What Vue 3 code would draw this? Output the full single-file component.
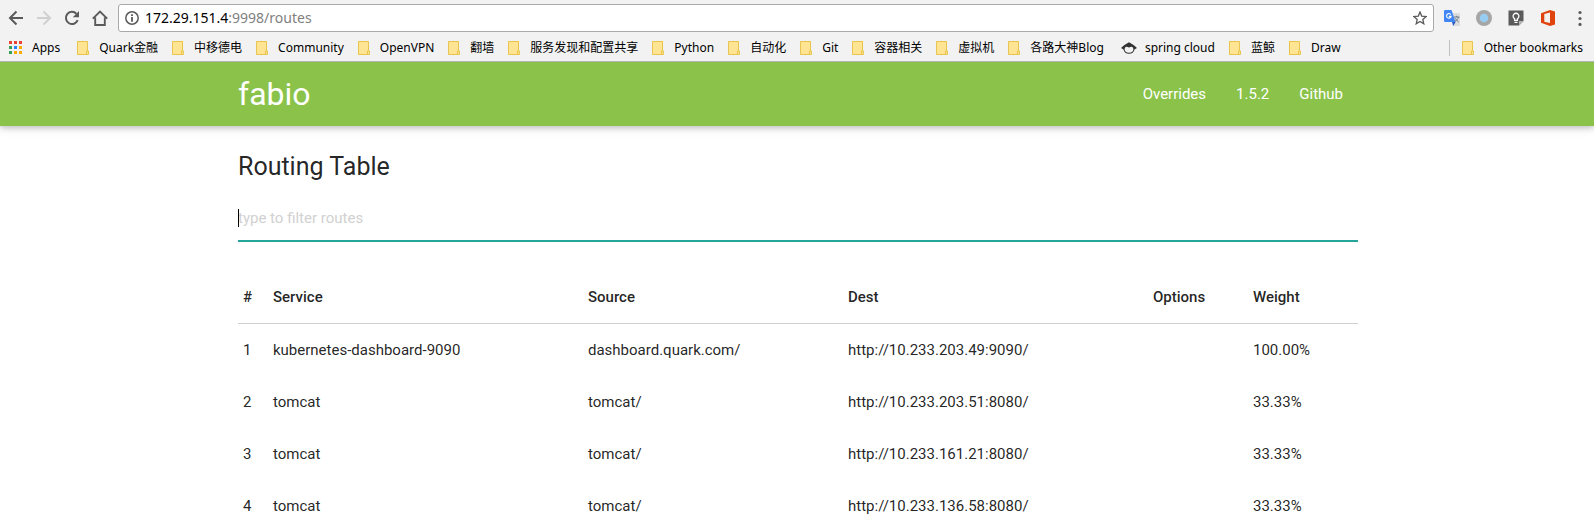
<script setup>
import { computed, onMounted, ref } from 'vue'

const bookmarks = [
  'Quark金融', '中移德电', 'Community', 'OpenVPN', '翻墙', '服务发现和配置共享', 'Python',
  '自动化', 'Git', '容器相关', '虚拟机', '各路大神Blog', 'spring cloud', '蓝鲸', 'Draw',
]
const appColors = ['#ea4335', '#ea4335', '#ea4335', '#34a056', '#2a83f5', '#f9ab00', '#34a056', '#f9ab00', '#f9ab00']

const routes = [
  { id: 1, service: 'kubernetes-dashboard-9090', source: 'dashboard.quark.com/', dest: 'http://10.233.203.49:9090/', options: '', weight: '100.00%' },
  { id: 2, service: 'tomcat', source: 'tomcat/', dest: 'http://10.233.203.51:8080/', options: '', weight: '33.33%' },
  { id: 3, service: 'tomcat', source: 'tomcat/', dest: 'http://10.233.161.21:8080/', options: '', weight: '33.33%' },
  { id: 4, service: 'tomcat', source: 'tomcat/', dest: 'http://10.233.136.58:8080/', options: '', weight: '33.33%' },
]

const filter = ref('')
const filterBox = ref(null)
const focused = ref(false)
const visible = computed(() => {
  const q = filter.value.toLowerCase()
  return routes.filter((r) => `${r.service} ${r.source} ${r.dest}`.toLowerCase().includes(q))
})
onMounted(() => filterBox.value.focus())
</script>

<template>
  <div class="page">
    <div class="browser">
      <div class="toolbar">
        <button class="tool" aria-label="Back">
          <svg width="16" height="16" viewBox="0 0 16 16"><path d="M15 8H2.5M8.5 1.5 2 8l6.5 6.5" fill="none" stroke="#5a5a5a" stroke-width="2" /></svg>
        </button>
        <button class="tool" aria-label="Forward">
          <svg width="16" height="16" viewBox="0 0 16 16"><path d="M1 8h12.5M7.5 1.5 14 8l-6.5 6.5" fill="none" stroke="#d0d0d0" stroke-width="2" /></svg>
        </button>
        <button class="tool" aria-label="Reload">
          <svg width="16" height="16" viewBox="0 0 16 16"><path d="M13.7 10.2A6.1 6.1 0 1 1 12.4 3.7" fill="none" stroke="#5a5a5a" stroke-width="2" /><path d="M15 1v6.2H8.8z" fill="#5a5a5a" /></svg>
        </button>
        <button class="tool" aria-label="Home">
          <svg width="16" height="16" viewBox="0 0 16 16"><path d="M.8 8.6 8 1.6l7.2 7M3.2 7.5V15h9.6V7.5" fill="none" stroke="#5a5a5a" stroke-width="1.9" /></svg>
        </button>
        <div class="omnibox">
          <svg width="14" height="14" viewBox="0 0 14 14"><circle cx="7" cy="7" r="6.2" fill="none" stroke="#5a5a5a" stroke-width="1.5" /><path d="M6.1 3.2h1.8V5H6.1zM6.1 6.1h1.8v4.7H6.1z" fill="#5a5a5a" /></svg>
          <span class="address"><b>172.29.151.4</b>:9998/routes</span>
          <button class="star" aria-label="Bookmark this page">
            <svg width="14" height="14" viewBox="0 0 14 14"><path d="m7 1 1.7 4.1 4.5.4-3.4 2.9 1 4.4L7 10.5l-3.8 2.3 1-4.4L.8 5.5l4.5-.4z" fill="none" stroke="#5a5a5a" stroke-width="1.3" /></svg>
          </button>
        </div>
        <div class="extensions">
          <button class="tool" aria-label="Translate">
            <svg width="16" height="16" viewBox="0 0 16 16"><path d="M6 3h9a1 1 0 0 1 1 1v11a1 1 0 0 1-1 1H9z" fill="#dcdcdc" /><path d="M1 0h6.5l4 12H1a1 1 0 0 1-1-1V1a1 1 0 0 1 1-1z" fill="#4285f4" /><path d="M8 12h3.6L9.2 16z" fill="#3058c8" /><path d="M6.8 4.6A2.3 2.3 0 1 0 7.1 6.4H4.9" fill="none" stroke="#fff" stroke-width="1.1" /><path d="M10 7h5.5M12.5 5.8V7M14.5 7c-.5 2-2 3.500-3.600 4.600M11.300 8.300c.8 1.500 2 2.800 3.400 3.700" fill="none" stroke="#6b7c86" stroke-width="1" /></svg>
          </button>
          <button class="tool" aria-label="Circle extension">
            <svg width="16" height="16" viewBox="0 0 16 16"><circle cx="8" cy="8" r="8" fill="#a6a6a6" /><circle cx="8" cy="8" r="4.300" fill="#98cdf2" /></svg>
          </button>
          <button class="tool" aria-label="Keep">
            <svg width="16" height="16" viewBox="0 0 16 16"><path d="M.5.500h15V11l-4.500 4.500H.5z" fill="#5b5b5b" /><path d="M11 15.500V11h4.500z" fill="#b5b5b5" /><path d="M6.600 10.300V8.700a2.900 2.900 0 1 1 2.800 0v1.600zM6.500 12.300h3" fill="none" stroke="#fff" stroke-width="1.300" /></svg>
          </button>
          <button class="tool" aria-label="Office">
            <svg width="16" height="16" viewBox="0 0 16 16"><path fill-rule="evenodd" d="M1 3.200 10 0l5 1.500v13L10 16 1 12.800zM4.300 4.100v7.700L10 13V2.600z" fill="#e0440e" /></svg>
          </button>
          <button class="tool" aria-label="Menu">
            <svg width="16" height="16" viewBox="0 0 16 16"><g fill="#5a5a5a"><circle cx="8" cy="2.500" r="1.600" /><circle cx="8" cy="8.500" r="1.600" /><circle cx="8" cy="14.400" r="1.600" /></g></svg>
          </button>
        </div>
      </div>
      <div class="bookmarks">
        <button class="bookmark apps">
          <svg width="13" height="13" viewBox="0 0 13 13"><rect v-for="(c, i) in appColors" :key="i" :x="(i % 3) * 5" :y="Math.floor(i / 3) * 5" width="3" height="3" :fill="c" /></svg>
          Apps
        </button>
        <button v-for="name in bookmarks" :key="name" class="bookmark" :class="{ site: name === 'spring cloud' }">
          <svg v-if="name === 'spring cloud'" width="16" height="12" viewBox="0 0 16 12"><path d="M2.500 3.500 8 .3l5.500 3.200L8 5.500z" fill="#333" /><path fill-rule="evenodd" d="M2.500 3.800h11L16 6l-2.500 1.400C13 10 11 11.700 8 11.700S3 10 2.500 7.400L0 6zM8 4C5 4 3.600 5.500 3.600 7.200S5 10.700 8 10.700s4.400-1.800 4.400-3.500S11 4 8 4z" fill="#333" /></svg>
          <svg v-else width="12" height="14" viewBox="0 0 12 14"><path d="M.5.500h10v9.500h1v3.500H.5z" fill="#ffe593" stroke="#e8c44c" /><path d="M9.500 13v-3h1" fill="none" stroke="#e8c44c" /></svg>
          {{ name }}
        </button>
        <span class="divider"></span>
        <button class="bookmark other">
          <svg width="12" height="14" viewBox="0 0 12 14"><path d="M.5.500h10v9.500h1v3.500H.5z" fill="#ffe593" stroke="#e8c44c" /><path d="M9.500 13v-3h1" fill="none" stroke="#e8c44c" /></svg>
          Other bookmarks
        </button>
      </div>
    </div>

    <header class="nav">
      <a class="logo" href="#">fabio</a>
      <nav>
        <a href="#overrides">Overrides</a>
        <a href="#version">1.5.2</a>
        <a href="#github">Github</a>
      </nav>
    </header>

    <main>
      <h1>Routing Table</h1>
      <div class="field">
        <input
          ref="filterBox" v-model="filter" type="text" aria-label="Filter routes"
          placeholder="type to filter routes" @focus="focused = true" @blur="focused = false"
        />
        <span v-if="focused && !filter" class="caret"></span>
      </div>
      <table>
        <colgroup>
          <col class="c-id" /><col class="c-service" /><col class="c-source" /><col class="c-dest" /><col class="c-options" /><col class="c-weight" />
        </colgroup>
        <thead>
          <tr><th>#</th><th>Service</th><th>Source</th><th>Dest</th><th>Options</th><th>Weight</th></tr>
        </thead>
        <tbody>
          <tr v-for="r in visible" :key="r.id">
            <td>{{ r.id }}</td><td>{{ r.service }}</td><td>{{ r.source }}</td><td>{{ r.dest }}</td><td>{{ r.options }}</td><td>{{ r.weight }}</td>
          </tr>
        </tbody>
      </table>
    </main>
  </div>
</template>

<style>
body { margin: 0; background: #fff; }
</style>

<style scoped>
.page { font-family: Roboto, "Noto Sans CJK SC", sans-serif; font-size: 15px; color: rgba(0, 0, 0, 0.87); }
button { border: 0; padding: 0; background: none; font: inherit; color: inherit; }
svg { display: block; flex: none; }
a { color: inherit; text-decoration: none; }

.browser { background: #f2f2f2; border-bottom: 1px solid #b3b3b3; font-family: "Noto Sans", "Noto Sans CJK SC", sans-serif; color: #000; }
.toolbar { display: flex; align-items: center; gap: 12px; padding: 4px 6px 0 8px; }
.omnibox { flex: 1; display: flex; align-items: center; box-sizing: border-box; height: 28px; margin: 0 -2px; padding: 0 6px; gap: 6px; background: #fff; border: 1px solid #a9a9a9; border-radius: 3px; }
.address { flex: 1; font-size: 14px; line-height: 20px; color: #808080; }
.address b { font-weight: 400; color: #000; }
.extensions { display: flex; gap: 16px; }
.bookmarks { display: flex; align-items: center; gap: 14px; height: 27px; padding: 2px 11px 0 9px; }
.bookmark { display: flex; align-items: center; gap: 10px; font-size: 12px; line-height: 16px; white-space: nowrap; }
.bookmark.apps { margin-right: 3px; }
.bookmark.site { gap: 8px; margin-left: 3px; }
.divider { width: 1px; height: 16px; margin-left: auto; background: #c0c0c0; }
.other { margin-left: -2px; }

.nav { display: flex; justify-content: space-between; align-items: center; height: 64px; padding: 0 236px 0 238px; background: #8bc34a; color: #fff; box-shadow: 0 2px 5px rgba(0, 0, 0, 0.16), 0 2px 10px rgba(0, 0, 0, 0.12); }
.logo { font-size: 32px; line-height: 64px; }
.nav nav { display: flex; }
.nav nav a { padding: 0 15px; line-height: 64px; }

main { padding: 0 236px 0 238px; }
h1 { margin: 25px 0 13px; font-size: 25px; line-height: 32px; font-weight: 400; }
.field { position: relative; }
input { display: block; box-sizing: border-box; width: 100%; height: 46px; padding: 0; border: 0; border-bottom: 2px solid #26a69a; background: transparent; outline: 0; font: inherit; color: inherit; caret-color: transparent; }
input::placeholder { color: #d1d1d1; opacity: 1; }
.caret { position: absolute; left: 0; top: 13px; width: 1px; height: 18px; background: #000; }

.browser, .nav { position: relative; }
.browser { z-index: 1; }

table { width: 100%; margin-top: 29px; table-layout: fixed; border-collapse: collapse; }
thead { border-bottom: 1px solid #d0d0d0; }
th, td { padding: 15px 5px; line-height: 22px; text-align: left; }
th { font-weight: 500; }
td { font-weight: 400; }
.c-id { width: 30px; }
.c-service { width: 315px; }
.c-source { width: 260px; }
.c-dest { width: 305px; }
.c-options { width: 100px; }
.c-weight { width: 110px; }
</style>
